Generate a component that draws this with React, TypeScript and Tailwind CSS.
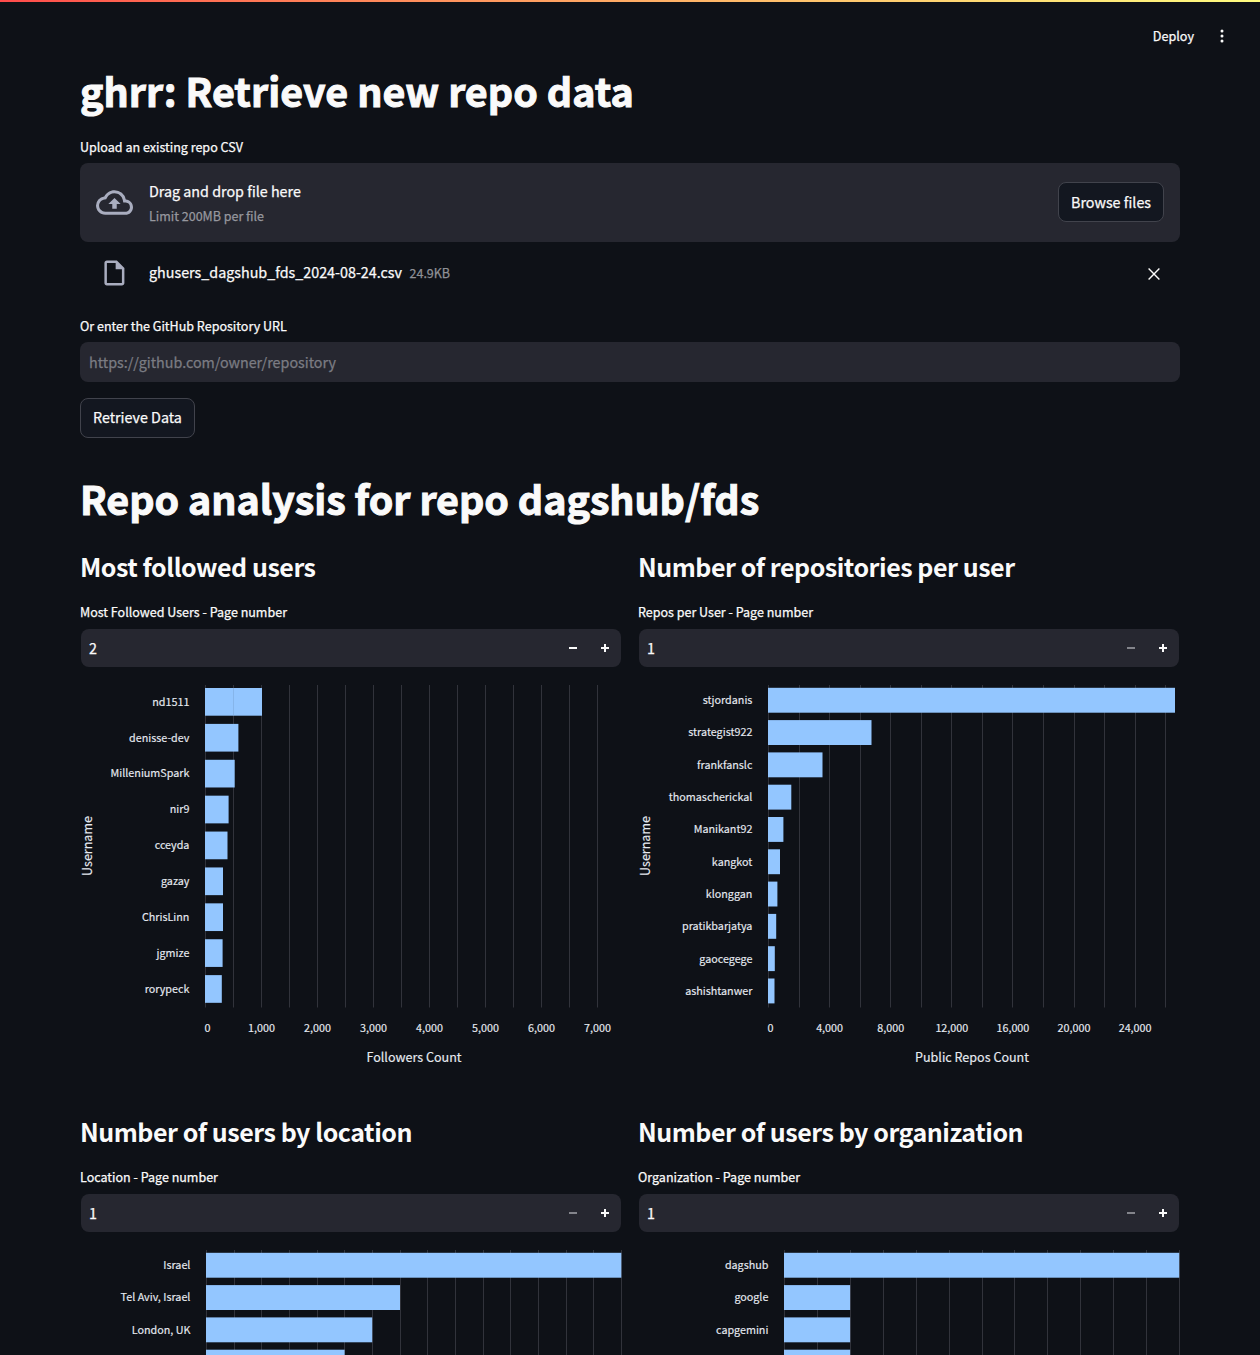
type Bar = { label: string; end: number };

type ChartSpec = {
  bars: Bar[];
  plotX: number;
  lines: number[];
  step: number;
  barHeight: number;
  firstBar: number;
  yTitle?: string;
  xTitle?: string;
  xTitleAt?: number;
  ticks?: { label: string; at: number }[];
};

type PanelSpec = {
  title: string;
  label: string;
  value: number;
  chart: ChartSpec;
};

const evenLines = (start: number, gap: number, count: number) =>
  Array.from({ length: count }, (_, i) => Math.round(start + gap * i));

const followers: ChartSpec = {
  plotX: 125,
  lines: evenLines(125, 28, 15),
  step: 35.89,
  barHeight: 27.7,
  firstBar: 21,
  yTitle: "Username",
  xTitle: "Followers Count",
  xTitleAt: 334,
  ticks: ["0", "1,000", "2,000", "3,000", "4,000", "5,000", "6,000", "7,000"].map((label, i) => ({
    label,
    at: i === 0 ? 127.5 : 125.5 + 56 * i,
  })),
  bars: [
    { label: "nd1511", end: 182 },
    { label: "denisse-dev", end: 158.4 },
    { label: "MilleniumSpark", end: 154.7 },
    { label: "nir9", end: 148.6 },
    { label: "cceyda", end: 147.5 },
    { label: "gazay", end: 143 },
    { label: "ChrisLinn", end: 143 },
    { label: "jgmize", end: 142.6 },
    { label: "rorypeck", end: 141.8 },
  ],
};

const repos: ChartSpec = {
  plotX: 130,
  lines: [130, 161, 191, 222, 252, 283, 313, 344, 374, 405, 436, 466, 497, 527],
  step: 32.3,
  barHeight: 24.9,
  firstBar: 20.8,
  yTitle: "Username",
  xTitle: "Public Repos Count",
  xTitleAt: 334,
  ticks: ["0", "4,000", "8,000", "12,000", "16,000", "20,000", "24,000"].map((label, i) => ({
    label,
    at: i === 0 ? 132.5 : 130.5 + 61.1 * i,
  })),
  bars: [
    { label: "stjordanis", end: 537 },
    { label: "strategist922", end: 233.5 },
    { label: "frankfanslc", end: 184.5 },
    { label: "thomascherickal", end: 153.3 },
    { label: "Manikant92", end: 145.4 },
    { label: "kangkot", end: 142 },
    { label: "klonggan", end: 139.4 },
    { label: "pratikbarjatya", end: 138.2 },
    { label: "gaocegege", end: 136.8 },
    { label: "ashishtanwer", end: 136.5 },
  ],
};

const locations: ChartSpec = {
  plotX: 126,
  lines: evenLines(126, 27.67, 16),
  step: 32.3,
  barHeight: 24.9,
  firstBar: 20.8,
  bars: [
    { label: "Israel", end: 541.3 },
    { label: "Tel Aviv, Israel", end: 320 },
    { label: "London, UK", end: 292.2 },
    { label: "", end: 264.6 },
  ],
};

const organizations: ChartSpec = {
  plotX: 146,
  lines: evenLines(146, 32.92, 13),
  step: 32.3,
  barHeight: 24.9,
  firstBar: 20.8,
  bars: [
    { label: "dagshub", end: 541.2 },
    { label: "google", end: 212.1 },
    { label: "capgemini", end: 212.1 },
    { label: "", end: 212.1 },
  ],
};

const rows: PanelSpec[][] = [
  [
    { title: "Most followed users", label: "Most Followed Users - Page number", value: 2, chart: followers },
    { title: "Number of repositories per user", label: "Repos per User - Page number", value: 1, chart: repos },
  ],
  [
    { title: "Number of users by location", label: "Location - Page number", value: 1, chart: locations },
    { title: "Number of users by organization", label: "Organization - Page number", value: 1, chart: organizations },
  ],
];

function BarChart({ spec }: { spec: ChartSpec }) {
  return (
    <svg width="542" height="423" viewBox="0 0 542 423" className="block overflow-visible fill-[#e6eaf1]">
      {spec.lines.map((x) => (
        <rect key={x} x={x} y="18" width="1" height="322.5" className="fill-[#31333b]" />
      ))}
      {spec.bars.map((bar, i) => {
        const y = spec.firstBar + spec.step * i;
        return (
          <g key={i}>
            <rect x={spec.plotX} y={y} width={bar.end - spec.plotX} height={spec.barHeight} className="fill-[#93c6ff]" />
            {bar.label && (
              <text
                x={spec.plotX - 15.6}
                y={y + spec.barHeight / 2 + 3.85}
                textAnchor="end"
                className="stroke-[#e6eaf1] stroke-[0.15] text-[10.75px]"
              >
                {bar.label}
              </text>
            )}
          </g>
        );
      })}
      {spec.plotX === 125 && <rect x="153" y="21" width="1" height="27" className="fill-[#86b5ea]" />}
      {spec.ticks?.map((tick) => (
        <text
          key={tick.label}
          x={tick.at}
          y="365.3"
          textAnchor="middle"
          className="stroke-[#e6eaf1] stroke-[0.15] text-[10.75px]"
        >
          {tick.label}
        </text>
      ))}
      {spec.xTitle && (
        <text
          x={spec.xTitleAt}
          y="394.5"
          textAnchor="middle"
          className="stroke-[#e6eaf1] stroke-[0.15] text-[12.55px]"
        >
          {spec.xTitle}
        </text>
      )}
      {spec.yTitle && (
        <text
          transform="translate(11.5 179) rotate(-90)"
          textAnchor="middle"
          className="stroke-[#e6eaf1] stroke-[0.15] text-[12.5px]"
        >
          {spec.yTitle}
        </text>
      )}
    </svg>
  );
}

function NumberInput({ value }: { value: number }) {
  return (
    <div className="mx-px mt-[7px] flex h-[38px] items-center rounded-lg bg-[#262730] pl-2">
      <span className="flex-1 text-[14.3px] leading-6">{value}</span>
      <button className={value > 1 ? "grid w-8 place-items-center" : "grid w-8 place-items-center text-[#83848b]"}>
        <svg width="8" height="8" viewBox="0 0 8 8" fill="currentColor">
          <path d="M0 3v2h8V3H0z" />
        </svg>
      </button>
      <button className="grid w-8 place-items-center">
        <svg width="8" height="8" viewBox="0 0 8 8" fill="currentColor">
          <path d="M3 0v3H0v2h3v3h2V5h3V3H5V0H3z" />
        </svg>
      </button>
    </div>
  );
}

function Panel({ panel }: { panel: PanelSpec }) {
  return (
    <section className="h-[565px]">
      <h2 className="text-[25px] leading-[34px] font-bold tracking-[-0.46px] [-webkit-text-stroke:0px]">{panel.title}</h2>
      <p className="mt-[18px] text-[12.52px] leading-[21px]">{panel.label}</p>
      <NumberInput value={panel.value} />
      <BarChart spec={panel.chart} />
    </section>
  );
}

export default function App() {
  return (
    <div className="relative h-[1355px] w-full overflow-hidden bg-[#0e1117] font-['Noto_Sans_CJK_SC',sans-serif] text-[#fafafa] [-webkit-text-stroke:0.25px]">
      <div className="h-0.5 bg-linear-to-r from-[#ff4b4b] to-[#fffd80]" />
      <header className="flex h-[62px] items-start justify-end pt-[23px] pr-[33px]">
        <span className="text-[12.6px] leading-[22px]">Deploy</span>
        <svg width="10" height="16" viewBox="0 0 10 16" fill="currentColor" className="mt-[3px] ml-[23px]">
          <circle cx="5" cy="3" r="1.5" />
          <circle cx="5" cy="8" r="1.5" />
          <circle cx="5" cy="13.1" r="1.5" />
        </svg>
      </header>

      <main className="px-20">
        <h1 className="text-[39.4px] leading-[52px] font-bold tracking-[0.02px] [-webkit-text-stroke:1px]">
          ghrr: Retrieve new repo data
        </h1>

        <p className="mt-5 text-[12.54px] leading-[21px]">Upload an existing repo CSV</p>
        <div className="mt-1.5 flex h-[79px] items-center rounded-lg bg-[#262730] px-4">
          <svg width="37" height="37" viewBox="0 0 24 24" className="mr-4 fill-[#a9adbf]">
            <path d="M19.35 10.04A7.49 7.49 0 0 0 12 4C9.11 4 6.6 5.64 5.35 8.04A5.994 5.994 0 0 0 0 14c0 3.31 2.69 6 6 6h13c2.76 0 5-2.24 5-5 0-2.64-2.05-4.78-4.65-4.96zM19 18H6c-2.21 0-4-1.79-4-4 0-2.05 1.53-3.76 3.56-3.97l1.07-.11.5-.95A5.469 5.469 0 0 1 12 6c2.62 0 4.88 1.86 5.39 4.43l.3 1.5 1.53.11A2.98 2.98 0 0 1 22 15c0 1.65-1.35 3-3 3zM8 13h2.55v3h2.9v-3H16l-4-4-4 4z" />
          </svg>
          <div className="flex-1">
            <p className="text-[14.3px] leading-[26px]">Drag and drop file here</p>
            <p className="text-[12.5px] leading-[24px] text-[#96979e]">Limit 200MB per file</p>
          </div>
          <button className="mb-px h-10 rounded-lg border border-[#41434c] bg-[#131720] px-3 pt-px text-[14.3px] leading-none">
            Browse files
          </button>
        </div>

        <div className="flex h-[60px] items-center pr-5 pl-[19px]">
          <svg width="30" height="30" viewBox="0 0 24 24" className="mt-[2px] mr-5 translate-x-[0.4px] fill-[#a9adbf]">
            <path d="M14 2H6c-1.1 0-1.99.9-1.99 2L4 20c0 1.1.89 2 1.99 2H18c1.1 0 2-.9 2-2V8l-6-6zM6 20V4h7v5h5v11H6z" />
          </svg>
          <span className="text-[14.32px] leading-6">ghusers_dagshub_fds_2024-08-24.csv</span>
          <span className="mt-0.5 ml-[7.5px] flex-1 text-[12.5px] leading-6 text-[#8f9096]">24.9KB</span>
          <svg width="12" height="12" viewBox="0 0 12 12" className="mt-1 fill-none stroke-[#fafafa] stroke-[1.4]">
            <path d="M.6.6l10.8 10.8M11.4.6L.6 11.4" />
          </svg>
        </div>

        <p className="mt-[13px] text-[12.54px] leading-[21px]">Or enter the GitHub Repository URL</p>
        <div className="mt-1.5 flex h-10 items-center rounded-lg bg-[#262730] px-[9px]">
          <span className="text-[14.31px] leading-6 text-[#7b7c83]">https://github.com/owner/repository</span>
        </div>
        <button className="mt-4 block h-10 rounded-lg border border-[#41434c] bg-[#131720] px-3 pb-0.5 text-[14.3px] leading-none">
          Retrieve Data
        </button>

        <h1 className="mt-[34px] mb-[25px] text-[39.4px] leading-[52px] font-bold tracking-[-0.03px] [-webkit-text-stroke:1px]">
          Repo analysis for repo dagshub/fds
        </h1>
        {rows.map((row, i) => (
          <div key={i} className="grid grid-cols-2 gap-4">
            {row.map((panel) => (
              <Panel key={panel.title} panel={panel} />
            ))}
          </div>
        ))}
      </main>
    </div>
  );
}
